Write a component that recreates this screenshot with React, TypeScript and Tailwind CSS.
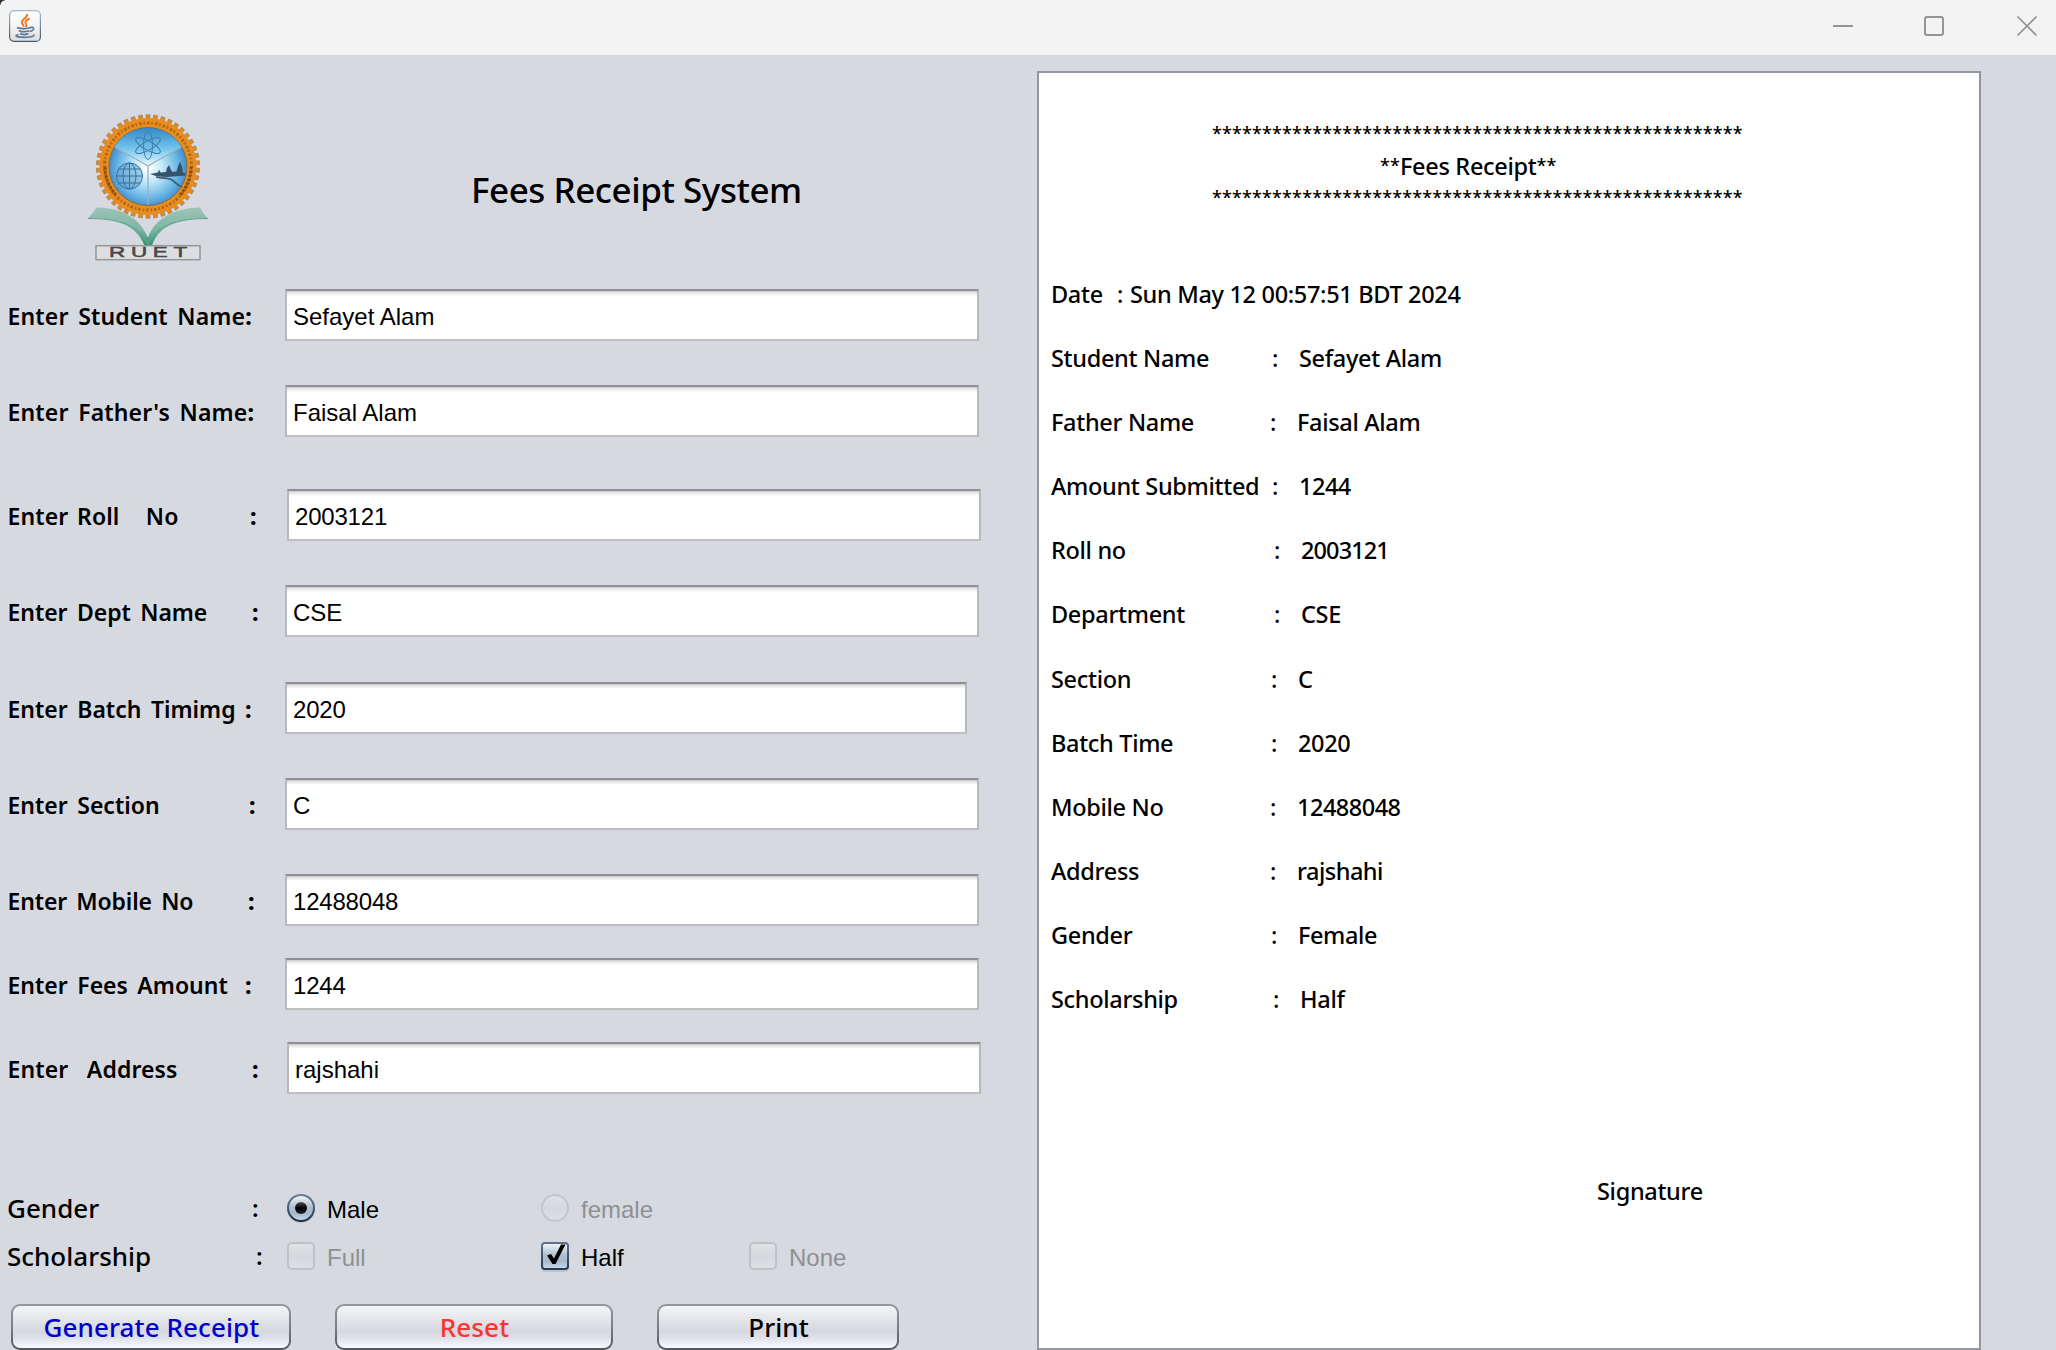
import type { ReactNode } from 'react';

type Field = { label: string; value: string; gap: string; label2: string; colon: string; box: string };

const fields: Field[] = [
  { label: 'Enter Student Name', value: 'Sefayet Alam', gap: '', label2: 'tracking-[0.15px] [word-spacing:3.5px]', colon: 'w-[45px]', box: 'w-[694px]' },
  { label: "Enter Father's Name", value: 'Faisal Alam', gap: 'mt-[44px]', label2: 'tracking-[0.15px] [word-spacing:3.5px]', colon: 'w-[40px]', box: 'w-[694px]' },
  { label: 'Enter Roll   No', value: '2003121', gap: 'mt-[52px]', label2: 'tracking-[0.1px] [word-spacing:2.7px]', colon: 'w-[37px]', box: 'w-[694px]' },
  { label: 'Enter Dept Name', value: 'CSE', gap: 'mt-[44px]', label2: 'tracking-[-0.05px] [word-spacing:3.5px]', colon: 'w-[33px]', box: 'w-[694px]' },
  { label: 'Enter Batch Timimg', value: '2020', gap: 'mt-[45px]', label2: 'tracking-[0px] [word-spacing:3.5px]', colon: 'w-[40px]', box: 'w-[682px]' },
  { label: 'Enter Section', value: 'C', gap: 'mt-[44px]', label2: 'tracking-[0px] [word-spacing:3.5px]', colon: 'w-[36px]', box: 'w-[694px]' },
  { label: 'Enter Mobile No', value: '12488048', gap: 'mt-[44px]', label2: 'tracking-[-0.15px] [word-spacing:3.5px]', colon: 'w-[37px]', box: 'w-[694px]' },
  { label: 'Enter Fees Amount', value: '1244', gap: 'mt-[32px]', label2: 'tracking-[0px] [word-spacing:3.5px]', colon: 'w-[40px]', box: 'w-[694px]' },
  { label: 'Enter  Address', value: 'rajshahi', gap: 'mt-[32px]', label2: 'tracking-[0.1px] [word-spacing:3.2px]', colon: 'w-[35px]', box: 'w-[694px]' },
];

type Line = { label: string; value: string; colon: string; gap?: string; fit?: string };

const lines: Line[] = [
  { label: 'Student Name', value: 'Sefayet Alam', colon: 'ml-[221px]' },
  { label: 'Father Name', value: 'Faisal Alam', colon: 'ml-[219px]' },
  { label: 'Amount Submitted', value: '1244', colon: 'ml-[221px]', fit: 'tracking-[-0.5px]' },
  { label: 'Roll no', value: '2003121', colon: 'ml-[223px]', fit: 'tracking-[-0.9px]' },
  { label: 'Department', value: 'CSE', colon: 'ml-[223px]' },
  { label: 'Section', value: 'C', colon: 'ml-[220px]', gap: 'mt-[33px]' },
  { label: 'Batch Time', value: '2020', colon: 'ml-[220px]' },
  { label: 'Mobile No', value: '12488048', colon: 'ml-[219px]', fit: 'tracking-[-0.5px]' },
  { label: 'Address', value: 'rajshahi', colon: 'ml-[219px]', fit: 'tracking-[-0.5px]' },
  { label: 'Gender', value: 'Female', colon: 'ml-[220px]', fit: 'tracking-[-0.4px]' },
  { label: 'Scholarship', value: 'Half', colon: 'ml-[222px]' },
];

const stars = '*'.repeat(53);

function JavaIcon() {
  return (
    <svg viewBox="0 0 32 32" className="ml-[9px] size-8">
      <defs>
        <linearGradient id="jb" x1="0" y1="0" x2="0" y2="1">
          <stop offset="0" stopColor="#fff" />
          <stop offset=".5" stopColor="#f4f4f4" />
          <stop offset="1" stopColor="#dcdcdc" />
        </linearGradient>
        <linearGradient id="je" x1="0" y1="0" x2="0" y2="1">
          <stop offset="0" stopColor="#a5b8cc" />
          <stop offset="1" stopColor="#40596e" />
        </linearGradient>
      </defs>
      <rect x=".6" y=".6" width="30.8" height="30.8" rx="4.5" fill="url(#jb)" stroke="url(#je)" strokeWidth="1.2" />
      <g fill="none" stroke="#ee7518" strokeLinecap="round">
        <path d="M18 4.800c.6 3-5.500 4.500-5.200 7.700.1 1.300 1.200 2.200 1.800 3.300" strokeWidth="2" />
        <path d="M20 8.800c-2 .9-3.800 2-3.600 3.600.2 1.300 1.400 1.900.8 3.800" strokeWidth="1.900" />
      </g>
      <g fill="none" stroke="#56799a" strokeLinecap="round">
        <path d="M8.500 17.800c3 1.100 10.500 1.100 13.300-.3" strokeWidth="1.700" />
        <path d="M10.500 20.900c2 1.100 6.800 1 9.200.1" strokeWidth="1.700" />
        <path d="M11.600 23.800c2 .9 5.300.8 7.200.1" strokeWidth="1.700" />
        <path d="M22 17.500c3.600-1.300 3.700 2.700-.8 4" strokeWidth="1.500" />
        <path d="M9 24.800c-6.500 2 4 2.800 8.500 2.500 4.300-.2 8-1 7.300-2.300" strokeWidth="1.600" />
      </g>
    </svg>
  );
}

const teeth = Array.from({ length: 42 }, (_, i) => (i * 360) / 42);

function Crest() {
  return (
    <svg viewBox="85 112 126 152" className="ml-[85px] mt-[57px] h-[152px] w-[126px]">
      <defs>
        <radialGradient id="sky" cx="148" cy="168" r="40" gradientUnits="userSpaceOnUse">
          <stop offset="0" stopColor="#fff" />
          <stop offset=".35" stopColor="#c4e9fb" />
          <stop offset=".75" stopColor="#69b6e6" />
          <stop offset="1" stopColor="#4288c6" />
        </radialGradient>
        <linearGradient id="top" x1="0" y1="127" x2="0" y2="165" gradientUnits="userSpaceOnUse">
          <stop offset="0" stopColor="#2f86c8" />
          <stop offset=".6" stopColor="#79c8ef" />
          <stop offset="1" stopColor="#e6f7ff" />
        </linearGradient>
        <linearGradient id="leaf" x1="0" y1="208" x2="0" y2="245" gradientUnits="userSpaceOnUse">
          <stop offset="0" stopColor="#9cc3b8" />
          <stop offset=".6" stopColor="#7db5a3" />
          <stop offset="1" stopColor="#2f9270" />
        </linearGradient>
      </defs>
      <g fill="#d98a30" stroke="#a87c48" strokeWidth=".6">
        {teeth.map((a) => (
          <rect key={a} x="146" y="114.800" width="4" height="6" transform={`rotate(${a} 148 166.500)`} />
        ))}
      </g>
      <circle cx="148" cy="166.500" r="48.500" fill="#e98c20" />
      <circle cx="148" cy="166.500" r="43.500" fill="none" stroke="#8d5514" strokeWidth="3" strokeDasharray="1.500 2.200 2.500 1.800" opacity=".65" />
      <path d="M105 167a43 43 0 0 0 12 29M191 167a43 43 0 0 1-12 29" fill="none" stroke="#6b3c0c" strokeWidth="3" strokeDasharray="2.500 1.500" opacity=".7" />
      <circle cx="148" cy="166.500" r="39" fill="url(#sky)" stroke="#6d6f5c" strokeWidth="1" />
      <path d="M148 166 114.500 147a39 39 0 0 1 67 0z" fill="url(#top)" />
      <path d="M148 166v39M148 166l-33-19M148 166l33-19" fill="none" stroke="#9db0b8" strokeWidth="1.300" />
      <g fill="none" stroke="#3f7ba6" strokeWidth="1">
        <ellipse cx="148" cy="145.500" rx="4.500" ry="14" />
        <ellipse cx="148" cy="145.500" rx="4.500" ry="14" transform="rotate(60 148 145.500)" />
        <ellipse cx="148" cy="145.500" rx="4.500" ry="14" transform="rotate(120 148 145.500)" />
      </g>
      <g fill="none" stroke="#3b7198" strokeWidth="1">
        <circle cx="129.500" cy="176" r="13" fill="#5f9fce" fillOpacity=".5" />
        <ellipse cx="129.500" cy="176" rx="6.500" ry="13" />
        <path d="M129.500 163v26M116.500 176h26M118.500 169h22M118.500 183h22" />
      </g>
      <path d="M150 174l8-1.500 1-3 1.500 3 5.500-.5 1-4 2-3 2 5 1.500 2 4-.5 1.500-5 2-5 2 5 1 6 2.500 1v2l-18 1.500-10-.5z" fill="#36536b" />
      <path d="M156 177c7 2 12 0 16 3 4 2 5 6 10 7" fill="none" stroke="#3c586e" strokeWidth="1.600" />
      <path d="M87.500 218.500c4-3 6-7 9-11 22 0 42 8 51.500 30C156 216 178 208 200 207.500c2 4 4 7 8 11-24 0-48 4-56 27h-7.500c-9-23-33-28-57-27z" fill="url(#leaf)" />
      <path d="M88 218.500c30 0 50 6 60 25 10-19 30-25 60-25" fill="none" stroke="#62a78f" strokeWidth="1.200" />
      <rect x="96" y="245.700" width="104" height="14" fill="#dcdee1" stroke="#94979a" strokeWidth="1.500" />
      <g transform="translate(109 257.300) scale(1.550 1)">
        <text x="0" y="0" textLength="50.500" lengthAdjust="spacing" fontSize="14.500" fontFamily="Liberation Sans, sans-serif" fill="#4a4648" stroke="#4a4648" strokeWidth=".5">
          RUET
        </text>
      </g>
    </svg>
  );
}

function Radio({ on }: { on?: boolean }) {
  if (!on) {
    return (
      <span className="size-7 rounded-full border-2 border-[#c4c6ca] bg-linear-to-b from-[#dfe1e4] via-[#d5d8dd] to-[#dcdee3]" />
    );
  }
  return (
    <svg viewBox="0 0 28 30" className="-mb-[2px] h-[30px] w-7">
      <defs>
        <linearGradient id="rb" x1="0" y1="0" x2="0" y2="1">
          <stop offset="0" stopColor="#f5f8fa" />
          <stop offset=".45" stopColor="#b0c1d1" />
          <stop offset=".7" stopColor="#a4b8cb" />
          <stop offset="1" stopColor="#cbdded" />
        </linearGradient>
        <linearGradient id="rs" x1="0" y1="0" x2="0" y2="1">
          <stop offset="0" stopColor="#6a7f93" />
          <stop offset="1" stopColor="#1d3347" />
        </linearGradient>
        <linearGradient id="rd" x1="0" y1="0" x2="0" y2="1">
          <stop offset="0" stopColor="#4a4f54" />
          <stop offset=".5" stopColor="#000" />
          <stop offset="1" stopColor="#222" />
        </linearGradient>
      </defs>
      <circle cx="14" cy="15.500" r="13.500" fill="#b9bdc5" />
      <circle cx="14" cy="14" r="13" fill="url(#rb)" stroke="url(#rs)" strokeWidth="2" />
      <circle cx="14" cy="14" r="6" fill="url(#rd)" />
    </svg>
  );
}

function Check({ on }: { on?: boolean }) {
  if (!on) {
    return (
      <span className="size-7 rounded-[5px] border-2 border-[#c0c2c6] bg-linear-to-b from-[#e0e2e4] via-[#d5d8dc] to-[#dcdee2]" />
    );
  }
  return (
    <svg viewBox="0 0 28 30" className="-mb-[2px] h-[30px] w-7">
      <rect x="0" y="2" width="28" height="28" rx="4" fill="#bfc3cb" />
      <rect x="1" y="1" width="26" height="26" rx="3" fill="url(#rb)" stroke="url(#ck)" strokeWidth="2" />
      <defs>
        <linearGradient id="ck" x1="0" y1="0" x2="0" y2="1">
          <stop offset="0" stopColor="#5d7388" />
          <stop offset="1" stopColor="#263b4f" />
        </linearGradient>
      </defs>
      <path d="M6 13.500l4-1.500 3 4.500L20 2.500h4.500L14.500 22h-3z" fill="#000" />
    </svg>
  );
}

function Option({ text, off, children }: { text: string; off?: boolean; children: ReactNode }) {
  return (
    <span className="flex h-7 items-center">
      {children}
      <span className={`ml-[12px] mt-[3px] font-['Liberation_Sans',sans-serif] text-[24px] leading-7 ${off ? 'text-[#8e9092]' : 'text-black'}`}>
        {text}
      </span>
    </span>
  );
}

function Button({ text, cls }: { text: string; cls: string }) {
  return (
    <button className={`h-[46px] rounded-[9px] bg-linear-to-b from-[#94979c] via-[#7b7e84] to-[#54565c] p-[2px] ${cls}`}>
      <span className="flex h-full items-center justify-center rounded-[7px] bg-[linear-gradient(to_bottom,#f4f5f7_0%,#e4e6ea_30%,#d5d8de_60%,#dde0e8_75%,#f8faff_100%)] pl-px pt-px text-[26px] font-[550] tracking-[0.1px]">
        {text}
      </span>
    </button>
  );
}

function Stars({ children }: { children: string }) {
  return <span className="align-[3px] text-[18px] leading-none tracking-[0.15px]">{children}</span>;
}

export default function App() {
  return (
    <div className="h-[1350px] w-[2056px] overflow-hidden bg-[#d6d9e0] font-['Noto_Sans',sans-serif] text-black">
      <header className="relative flex h-[55px] items-center bg-[#f3f3f3] pb-[3px]">
        <span className="absolute left-0 top-0 size-[5px] bg-[radial-gradient(circle_at_100%_100%,#f3f3f3_4px,#333_5px)]" />
        <JavaIcon />
        <svg viewBox="0 0 204 20" className="ml-auto mr-[19px] h-5 w-[204px]" fill="none" stroke="#949494">
          <path d="M0 10h20" strokeWidth="2" />
          <rect x="92" y="1" width="18" height="18" rx="2" strokeWidth="2" />
          <path d="M184.500.5l19 19M203.500.5l-19 19" strokeWidth="1.600" />
        </svg>
      </header>

      <main className="flex">
        <section className="w-[1037px]">
          <div className="flex h-[234px]">
            <Crest />
            <h1 className="ml-[260px] mt-[111px] whitespace-nowrap text-[35px] font-medium leading-[48px] tracking-[-0.45px]">
              Fees Receipt System
            </h1>
          </div>

          {fields.map((f) => (
            <div key={f.label} className={`flex h-[52px] items-center ${f.gap}`}>
              <div className={`flex ${f.value === '2003121' || f.value === 'rajshahi' ? 'w-[287px]' : 'w-[285px]'} pl-[7.500px] pt-[2px] text-[23px] leading-8`}>
                <span className={`whitespace-pre font-semibold ${f.label2}`}>{f.label}</span>
                <span className={`ml-auto font-extrabold ${f.colon}`}>:</span>
              </div>
              <div className={`flex h-[52px] items-center border-2 border-b-[#bfbfc0] border-l-[#b8b8bb] border-r-[#b8b8bb] border-t-[#8d8f93] bg-[linear-gradient(to_bottom,#c9c9ca_0px,#e9e9e9_2px,#fff_5px)] pl-[6px] pt-[3px] font-['Liberation_Sans',sans-serif] text-[24px] ${/^\d+$/.test(f.value) ? 'tracking-[-0.2px]' : ''} ${f.box}`}>
                {f.value}
              </div>
            </div>
          ))}

          <div className="mt-[100px] flex h-7 items-center pl-[7px]">
            <span className="w-[245px] text-[26px] font-[550] leading-7">Gender</span>
            <span className="w-[35px] text-[24px] font-semibold leading-7">:</span>
            <div className="w-[254px]">
              <Option text="Male"><Radio on /></Option>
            </div>
            <Option text="female" off><Radio /></Option>
          </div>
          <div className="mt-5 flex h-7 items-center pl-[7px]">
            <span className="w-[249px] text-[26px] font-[550] leading-7">Scholarship</span>
            <span className="w-[31px] text-[24px] font-semibold leading-7">:</span>
            <div className="w-[254px]">
              <Option text="Full" off><Check /></Option>
            </div>
            <div className="w-[208px]">
              <Option text="Half"><Check on /></Option>
            </div>
            <Option text="None" off><Check /></Option>
          </div>

          <div className="mt-[34px] flex gap-[44px] pl-[11px]">
            <Button text="Generate Receipt" cls="w-[280px] text-[#0000c8]" />
            <Button text="Reset" cls="w-[278px] text-[#ff3232]" />
            <Button text="Print" cls="w-[242px] text-black" />
          </div>
        </section>

        <section className="mt-4 h-[1279px] w-[944px] border-2 border-[#9297a1] bg-white pl-[12px] pt-[45px] text-[23.500px] font-medium leading-8 tracking-[-0.32px]">
          <div className="h-8 pl-[161px]"><Stars>{stars}</Stars></div>
          <div className="h-8 pl-[329px]"><Stars>**</Stars>Fees Receipt<Stars>**</Stars></div>
          <div className="h-8 pl-[161px]"><Stars>{stars}</Stars></div>
          <div className="mt-16 flex h-8">
            <span className="w-[66px]">Date</span>
            <span className="w-[13px]">:</span>
            <span>Sun May 12 00:57:51 BDT 2024</span>
          </div>
          {lines.map((l) => (
            <div key={l.label} className={`flex h-8 ${l.gap ?? 'mt-8'}`}>
              <span className="w-0 whitespace-nowrap">{l.label}</span>
              <span className={`w-[27px] ${l.colon}`}>:</span>
              <span className={l.fit ?? ''}>{l.value}</span>
            </div>
          ))}
          <div className="mt-40 h-8 pl-[546px]">Signature</div>
        </section>
      </main>
    </div>
  );
}
